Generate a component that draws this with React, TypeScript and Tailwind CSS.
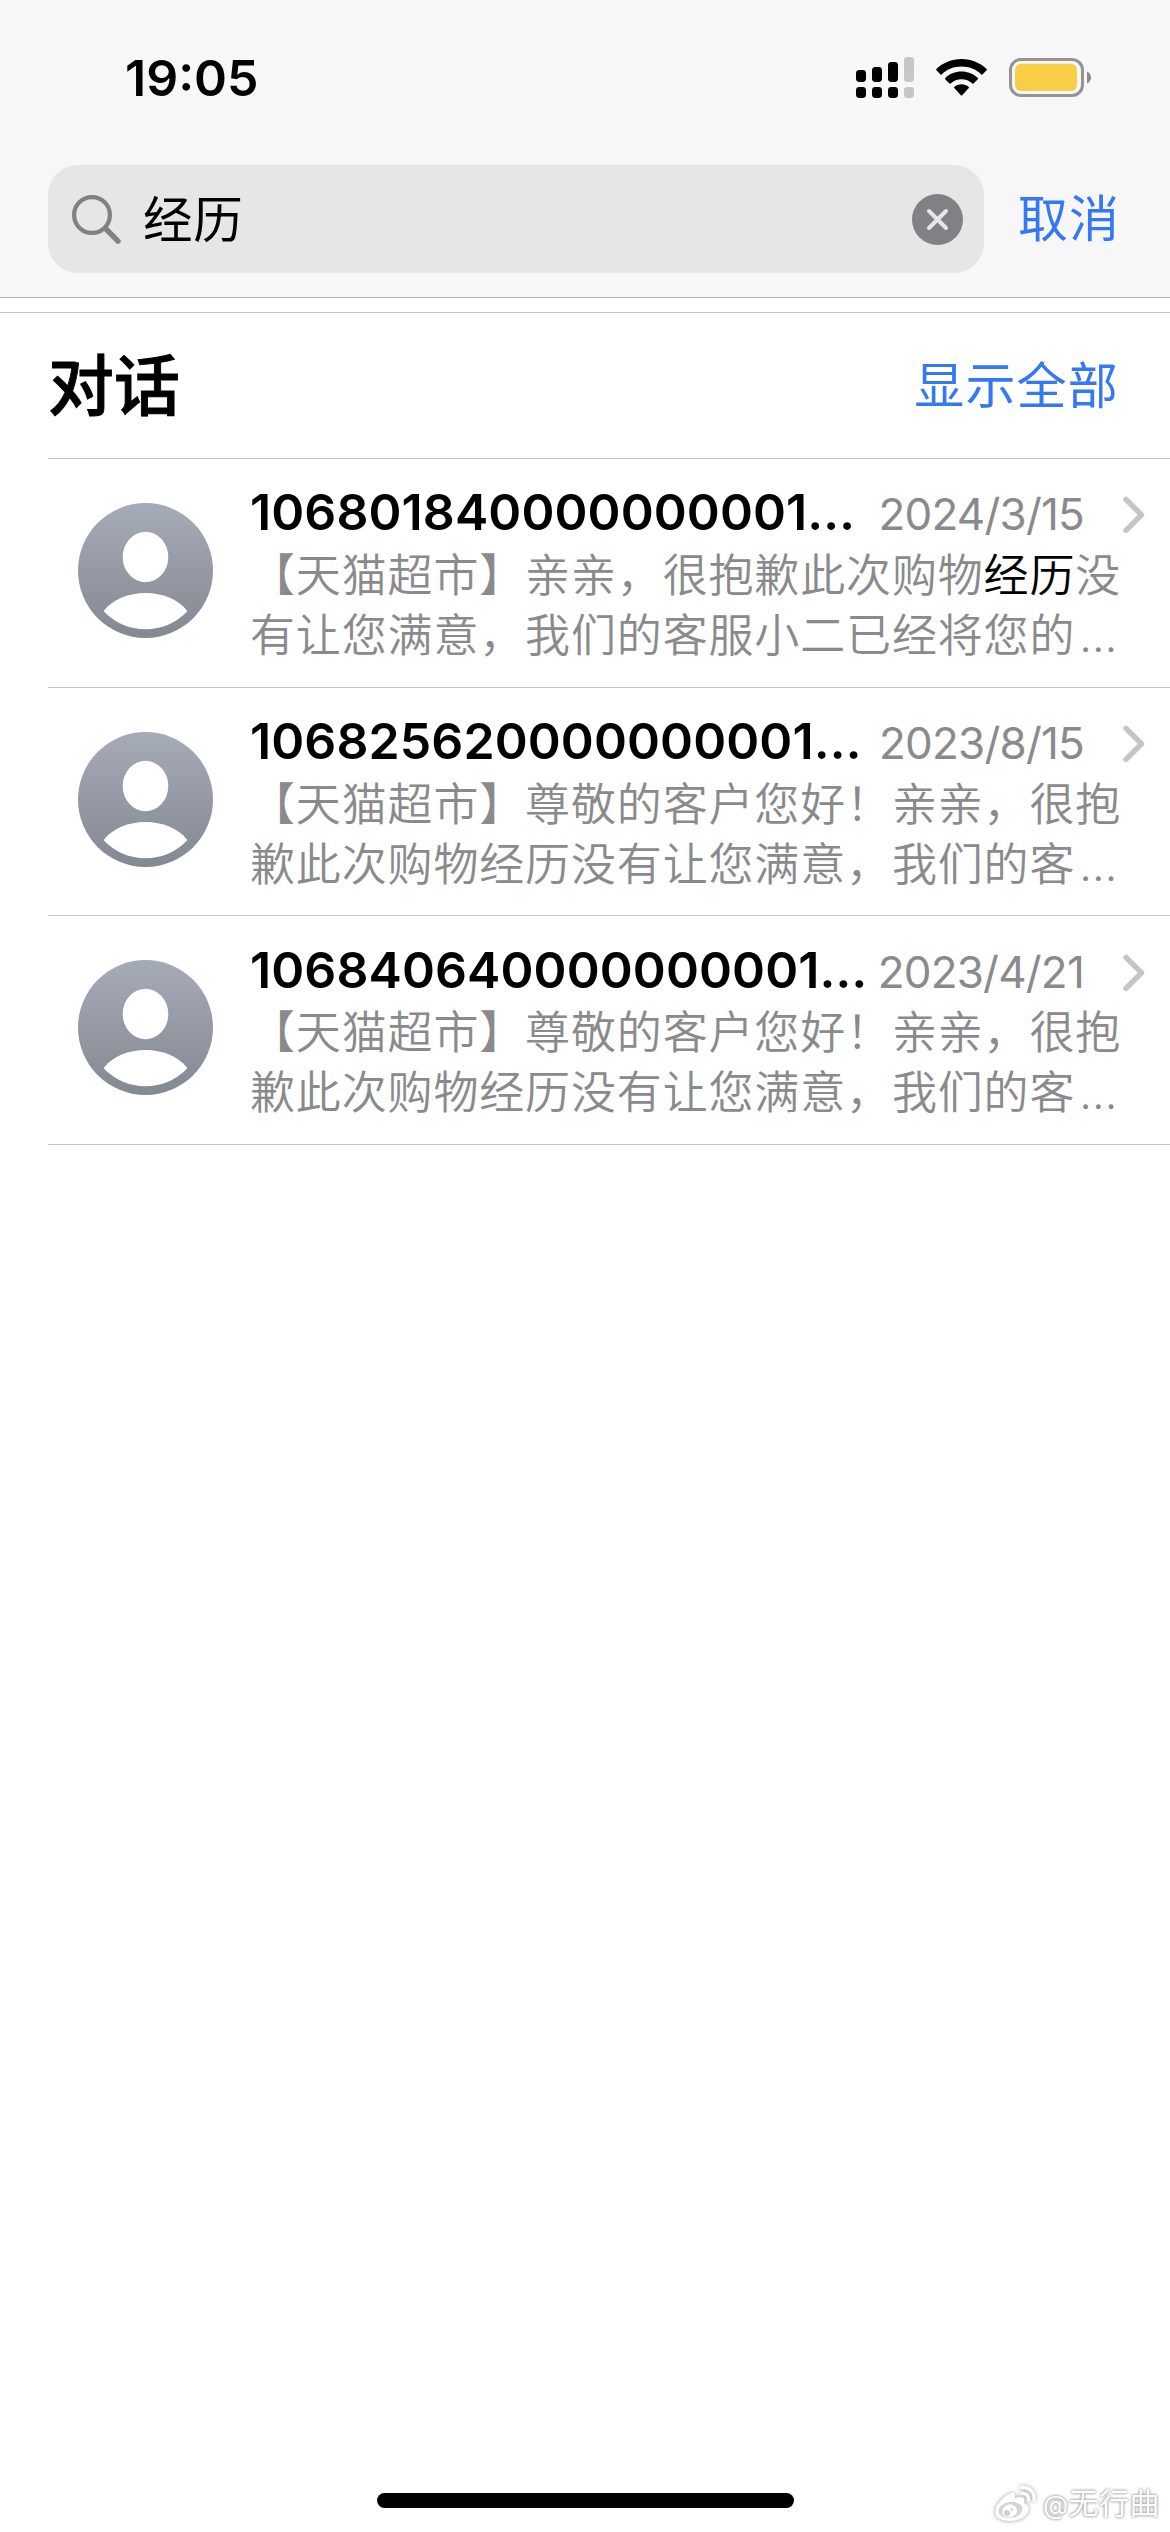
import type { ReactNode } from "react";

type Conversation = {
  sender: string;
  date: string;
  lines: [ReactNode, ReactNode];
};

const conversations: Conversation[] = [
  {
    sender: "106801840000000001",
    date: "2024/3/15",
    lines: [
      <>
        【天猫超市】亲亲，很抱歉此次购物<span className="text-black">经历</span>没
      </>,
      "有让您满意，我们的客服小二已经将您的",
    ],
  },
  {
    sender: "106825620000000001",
    date: "2023/8/15",
    lines: ["【天猫超市】尊敬的客户您好！亲亲，很抱", "歉此次购物经历没有让您满意，我们的客"],
  },
  {
    sender: "106840640000000001",
    date: "2023/4/21",
    lines: ["【天猫超市】尊敬的客户您好！亲亲，很抱", "歉此次购物经历没有让您满意，我们的客"],
  },
];

function SignalIcon() {
  return (
    <svg width="58" height="41" viewBox="0 0 58 41">
      <rect x="0" y="13" width="10" height="12" rx="3.4" />
      <rect x="16" y="10" width="10" height="15" rx="3.4" />
      <rect x="32" y="5" width="10" height="20" rx="3.4" />
      <rect x="48" y="0" width="10" height="25" rx="3.4" fill="#c6c6c6" />
      <rect x="0" y="30" width="10" height="11" rx="3.4" />
      <rect x="16" y="30" width="10" height="11" rx="3.4" />
      <rect x="32" y="30" width="10" height="11" rx="3.4" />
      <rect x="48" y="30" width="10" height="11" rx="3.4" fill="#c6c6c6" />
    </svg>
  );
}

function WifiIcon() {
  return (
    <svg width="51" height="37" viewBox="0 0 51 37">
      <path d="M25.5 0C35.3 0 44.3 3.8 50.6 10.1Q51.1 10.7 50.6 11.2L46.4 15.4Q45.9 15.9 45.3 15.4C40 10.3 33 7.6 25.5 7.6S11 10.3 5.7 15.4Q5.1 15.9 4.6 15.4L.4 11.2Q-.1 10.7.4 10.1C6.7 3.8 15.7 0 25.5 0Z" />
      <path d="M25.5 12.6C31.8 12.6 37.5 15 41.8 19Q42.4 19.6 41.8 20.2L37.5 24.4Q37 24.9 36.4 24.4C33.5 21.8 29.7 20.2 25.5 20.2S17.5 21.8 14.6 24.4Q14 24.9 13.5 24.4L9.2 20.2Q8.6 19.6 9.2 19C13.5 15 19.2 12.6 25.5 12.6Z" />
      <path d="M25.5 25.2C28.3 25.2 30.8 26.2 32.8 27.9Q33.4 28.5 32.8 29.1L26.1 36.3Q25.5 36.9 24.9 36.3L18.2 29.1Q17.6 28.5 18.2 27.9C20.2 26.2 22.7 25.2 25.5 25.2Z" />
    </svg>
  );
}

function BatteryIcon() {
  return (
    <svg width="83" height="39" viewBox="0 0 83 39">
      <rect x="1.5" y="1.5" width="72" height="36" rx="10.5" fill="none" stroke="#949494" strokeWidth="3" />
      <rect x="6" y="5.8" width="62" height="27.2" rx="6" fill="#f7ce46" />
      <path d="M78 13.5C80.5 14.6 82 16.8 82 19.5S80.5 24.4 78 25.5Z" fill="#8a8a8a" />
    </svg>
  );
}

function Avatar() {
  return (
    <svg className="shrink-0" width="135" height="135" viewBox="0 0 135 135">
      <defs>
        <linearGradient id="avatar" x1="0" y1="0" x2="0" y2="1">
          <stop offset="0" stopColor="#a6abb8" />
          <stop offset="1" stopColor="#848892" />
        </linearGradient>
      </defs>
      <circle cx="67.5" cy="67.5" r="67.5" fill="url(#avatar)" />
      <ellipse cx="67.5" cy="54" rx="22.8" ry="25.2" fill="#fff" />
      <path d="M26.3 107.2C35 96.4 50.5 90 67.5 90S100 96.4 108.7 107.2Q109.4 108.2 108.7 109.1C98 120 83.5 126.3 67.5 126.3S37 120 26.3 109.1Q25.6 108.2 26.3 107.2Z" fill="#fff" />
    </svg>
  );
}

function ConversationRow({ item }: { item: Conversation }) {
  return (
    <li className="ml-12 flex h-[228.67px] border-b border-[#c6c6c8] pl-[30px]">
      <div className="pt-11">
        <Avatar />
      </div>
      <div className="ml-[37px] w-[895px] pt-[23.4px]">
        <div className="flex h-[63.6px] items-baseline justify-between whitespace-nowrap">
          <span className="text-[50px] font-semibold leading-[61px] tracking-[0.1px]">{item.sender}…</span>
          <div className="flex items-baseline text-[#8a8a8d]">
            <span className="text-[44px] leading-[61px] tracking-[-0.8px]">{item.date}</span>
            <svg className="ml-[39px] translate-y-[2.4px] overflow-visible" width="22" height="33" viewBox="0 0 22 33">
              <path d="M3 0L18.5 15.5L3 31" fill="none" stroke="#c5c5c7" strokeWidth="5.5" strokeLinecap="round" strokeLinejoin="round" />
            </svg>
          </div>
        </div>
        <p className="whitespace-nowrap text-[45px] font-[350] leading-[60px] tracking-[0.85px] text-[#8a8a8d]">
          {item.lines[0]}
          <br />
          {item.lines[1]}
          <span className="ml-1 tracking-[0.5px]">…</span>
        </p>
      </div>
    </li>
  );
}

function Watermark() {
  return (
    <div className="absolute right-[10px] bottom-[9px] flex items-center gap-[7px]">
      <svg className="overflow-visible drop-shadow-[0_0_2px_#999]" width="42" height="36" viewBox="0 0 42 36">
        <path d="M15 8C20 5 22 8 21 12C27 10 32 11 30 17C36 19 36 25 31 30C24 36 9 37 3 31C-2 25 4 14 15 8Z" fill="#fff" />
        <ellipse cx="16.5" cy="24" rx="12" ry="8" fill="#d4d4d4" transform="rotate(-8 16.5 24)" />
        <ellipse cx="15.5" cy="25" rx="7.5" ry="6.5" fill="#fff" transform="rotate(-15 15.5 25)" />
        <circle cx="13" cy="27" r="3" fill="#cfcfcf" />
        <circle cx="18" cy="23.5" r="1.3" fill="#cfcfcf" />
        <path d="M27 1.5C35 .5 41 6 40 14M28 7.5C32 7 35 9.5 34.5 14" fill="none" stroke="#fff" strokeWidth="3" strokeLinecap="round" />
      </svg>
      <span className="text-[30px] leading-[36px] tracking-[0.5px] text-white [text-shadow:0_0_3px_#8a8a8a,0_0_3px_#bbb]">
        <span className="text-[26px]">@</span>无行曲
      </span>
    </div>
  );
}

export default function App() {
  return (
    <div className="relative flex h-[2532px] w-[1170px] flex-col overflow-hidden bg-white font-['Inter','Noto_Sans_CJK_SC',sans-serif] text-black [text-spacing-trim:space-all]">
      <header className="h-[298px] border-b border-[#b2b2b2] bg-[#f7f7f7]">
        <div className="flex h-[165px] items-start pt-[57px] pl-[125px]">
          <span className="mt-[-9px] w-[731px] text-[50px] font-semibold leading-[61px]">19:05</span>
          <div className="flex items-start">
            <SignalIcon />
            <div className="mt-[2px] ml-[22px]">
              <WifiIcon />
            </div>
            <div className="mt-px ml-[22px]">
              <BatteryIcon />
            </div>
          </div>
        </div>
        <div className="flex items-center pl-12">
          <div className="flex h-[108px] w-[936px] items-center rounded-[30px] bg-[#e6e6e7] pr-[21px] pl-6">
            <svg width="49" height="49" viewBox="0 0 49 49" fill="none" stroke="#818085" strokeLinecap="round">
              <circle cx="20" cy="20" r="17.9" strokeWidth="4.2" />
              <path d="M33.5 33.5L46 46.2" strokeWidth="5.4" />
            </svg>
            <span className="ml-[22px] flex-1 pt-[2px] text-[49.5px] leading-[60px] tracking-[0.8px]">经历</span>
            <svg width="51" height="51" viewBox="0 0 51 51">
              <circle cx="25.5" cy="25.5" r="25.5" fill="#818085" />
              <path d="M17 17L34 34M34 17L17 34" stroke="#e6e6e7" strokeWidth="4" strokeLinecap="round" />
            </svg>
          </div>
          <span className="ml-[34px] text-[50px] leading-[60px] tracking-[1px] text-[#3478f6]">取消</span>
        </div>
      </header>

      <section className="mt-[14px] border-t border-[#c6c6c8]">
        <div className="ml-12 flex h-[146px] items-center justify-between border-b border-[#c6c6c8] pr-[51px]">
          <h1 className="text-[66px] font-medium leading-[80px] [-webkit-text-stroke:0.9px_black]">对话</h1>
          <span className="pt-px text-[50px] leading-[60px] tracking-[1.2px] text-[#3478f6]">显示全部</span>
        </div>
        <ul>
          {conversations.map((item) => (
            <ConversationRow key={item.sender} item={item} />
          ))}
        </ul>
      </section>

      <div className="mx-auto mt-auto mb-6 h-[15px] w-[417px] rounded-full bg-black" />
      <Watermark />
    </div>
  );
}
